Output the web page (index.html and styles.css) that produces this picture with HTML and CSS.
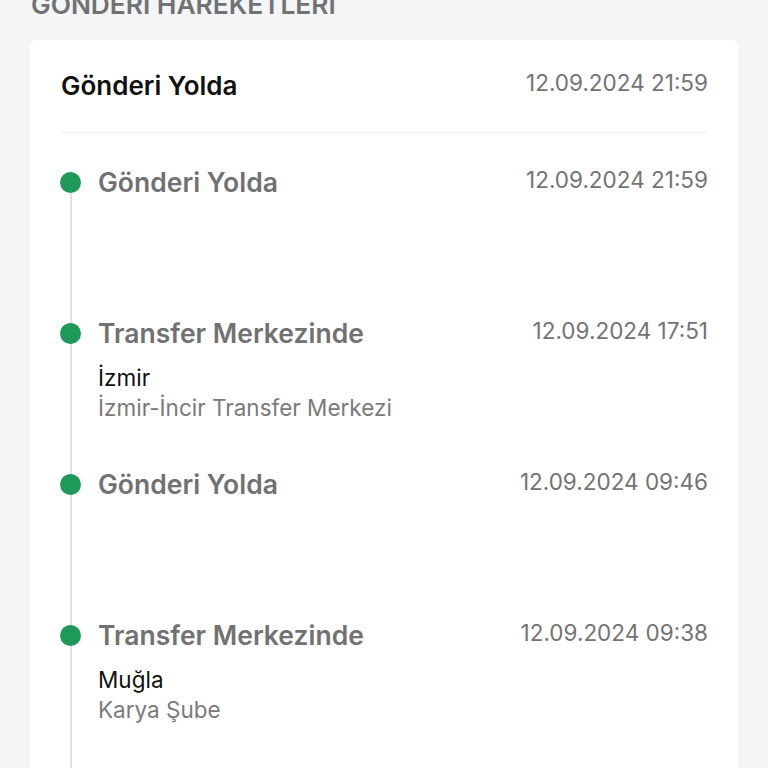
FILE: index.html
```html
<!DOCTYPE html>
<html lang="tr">
<head>
  <meta charset="UTF-8">
  <meta name="viewport" content="width=device-width, initial-scale=1.0">
  <title>Gönderi Hareketleri</title>
  <link rel="stylesheet" href="styles.css">
</head>
<body>
  <div class="page">
    <h2 class="section-title">GÖNDERİ HAREKETLERİ</h2>
    <div class="card">
      <div class="card-head">
        <span class="status">Gönderi Yolda</span>
        <span class="date">12.09.2024 21:59</span>
      </div>
      <ul class="timeline">
        <li class="event">
          <div class="event-row">
            <span class="event-title">Gönderi Yolda</span>
            <span class="date">12.09.2024 21:59</span>
          </div>
        </li>
        <li class="event">
          <div class="event-row">
            <span class="event-title">Transfer Merkezinde</span>
            <span class="date">12.09.2024 17:51</span>
          </div>
          <div class="city">İzmir</div>
          <div class="branch">İzmir-İncir Transfer Merkezi</div>
        </li>
        <li class="event">
          <div class="event-row">
            <span class="event-title">Gönderi Yolda</span>
            <span class="date">12.09.2024 09:46</span>
          </div>
        </li>
        <li class="event">
          <div class="event-row">
            <span class="event-title">Transfer Merkezinde</span>
            <span class="date">12.09.2024 09:38</span>
          </div>
          <div class="city">Muğla</div>
          <div class="branch">Karya Şube</div>
        </li>
      </ul>
    </div>
  </div>
</body>
</html>
```

FILE: styles.css
```css
body {
  font-family: Inter, "Noto Sans", sans-serif;
  margin: 0;
  padding: 0;
  background-color: #f4f5f7;
  color: #111;
  overflow: hidden;
}
.page {
  padding: 0 30px;
}
.section-title {
  margin: -10px 0 20px 1px;
  font-size: 26.3px;
  line-height: 30px;
  font-weight: 600;
  color: #707274;
}
.card {
  background-color: white;
  border-radius: 6px;
  padding: 0 30px 0 31px;
  height: 800px;
}
.card-head {
  display: flex;
  justify-content: space-between;
  align-items: center;
  padding: 30px 0 30px 0;
  border-bottom: 1px solid #f0f0f2;
}
.status {
  font-size: 26px;
  line-height: 32px;
  font-weight: 600;
  color: #111;
}
.date {
  font-size: 22.5px;
  line-height: 28px;
  color: #737373;
  position: relative;
  top: -3px;
}
.timeline {
  list-style: none;
  margin: 0;
  padding: 33px 0 0 0;
}
.event {
  position: relative;
  padding-left: 37px;
  height: 151px;
  box-sizing: border-box;
}
/* line down to the next item */
.event::before {
  content: '';
  position: absolute;
  left: 9px;
  top: 16px;
  width: 2px;
  height: 151px;
  background-color: #e0e0e0;
}
/* green dot */
.event::after {
  content: '';
  position: absolute;
  left: -1px;
  top: 6px;
  width: 21px;
  height: 21px;
  border-radius: 50%;
  background-color: #1e9a58;
}
.event-row {
  display: flex;
  justify-content: space-between;
  align-items: center;
  height: 32px;
  margin-bottom: 14px;
}
.event-row .date {
  top: -2px;
}
.event-title {
  font-size: 26.5px;
  font-weight: 600;
  color: #717171;
}
.city {
  font-size: 22.5px;
  line-height: 30px;
  color: #111;
}
.branch {
  font-size: 22.5px;
  line-height: 30px;
  color: #7a7a7a;
}
```
